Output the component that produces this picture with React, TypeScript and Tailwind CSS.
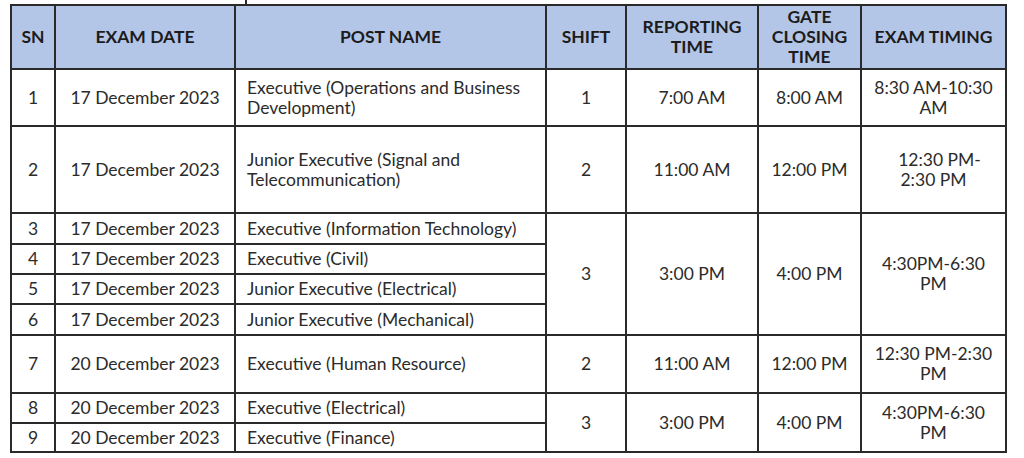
import React from 'react';

type Row = {
  sn: number;
  date: string;
  post: React.ReactNode;
  h: string;
  group?: { span: number; shift: string; report: string; gate: string; timing: React.ReactNode };
};

const rows: Row[] = [
  {
    sn: 1,
    date: '17 December 2023',
    post: (
      <>
        Executive (Operations and Business
        <br />
        Development)
      </>
    ),
    h: 'h-[57px]',
    group: { span: 1, shift: '1', report: '7:00 AM', gate: '8:00 AM', timing: <>8:30 AM-10:30<br />AM</> },
  },
  {
    sn: 2,
    date: '17 December 2023',
    post: (
      <>
        Junior Executive (Signal and
        <br />
        Telecommunication)
      </>
    ),
    h: 'h-[87px]',
    group: { span: 1, shift: '2', report: '11:00 AM', gate: '12:00 PM', timing: <span className="pl-3">12:30 PM-<br />2:30 PM</span> },
  },
  {
    sn: 3,
    date: '17 December 2023',
    post: 'Executive (Information Technology)',
    h: 'h-[31px]',
    group: { span: 4, shift: '3', report: '3:00 PM', gate: '4:00 PM', timing: <>4:30PM-6:30<br />PM</> },
  },
  { sn: 4, date: '17 December 2023', post: 'Executive (Civil)', h: 'h-[30px]' },
  { sn: 5, date: '17 December 2023', post: 'Junior Executive (Electrical)', h: 'h-[30px]' },
  { sn: 6, date: '17 December 2023', post: 'Junior Executive (Mechanical)', h: 'h-[31px]' },
  {
    sn: 7,
    date: '20 December 2023',
    post: 'Executive (Human Resource)',
    h: 'h-[58px]',
    group: { span: 1, shift: '2', report: '11:00 AM', gate: '12:00 PM', timing: <>12:30 PM-2:30<br />PM</> },
  },
  {
    sn: 8,
    date: '20 December 2023',
    post: 'Executive (Electrical)',
    h: 'h-[30px]',
    group: { span: 2, shift: '3', report: '3:00 PM', gate: '4:00 PM', timing: <>4:30PM-6:30<br />PM</> },
  },
  { sn: 9, date: '20 December 2023', post: 'Executive (Finance)', h: 'h-[29px]' },
];

const cell = 'border-2 border-[#2a2a2a] p-0 align-middle';

export default function App() {
  return (
    <div className="w-[1024px] h-[458px] bg-white overflow-hidden text-[#2b2b2b] font-['Lato','Noto_Sans',sans-serif]">
      {/* stub of the line from the content above */}
      <div className="h-[4px] ml-[245px] w-[2px] bg-[#2a2a2a]" />

      <table className="ml-[10px] w-[995px] border-collapse table-fixed text-[17.5px] leading-[20px]">
        <colgroup>
          <col className="w-[44px]" />
          <col className="w-[180px]" />
          <col className="w-[311px]" />
          <col className="w-[80px]" />
          <col className="w-[132px]" />
          <col className="w-[103px]" />
          <col className="w-[145px]" />
        </colgroup>
        <thead>
          <tr className="h-[64px] bg-[#b4c6e7] text-[#1c1c1c] font-bold text-center leading-[20px]">
            <th className={cell}>SN</th>
            <th className={cell}>EXAM DATE</th>
            <th className={cell}>POST NAME</th>
            <th className={cell}>SHIFT</th>
            <th className={cell}>
              REPORTING
              <br />
              TIME
            </th>
            <th className={cell}>
              GATE
              <br />
              CLOSING
              <br />
              TIME
            </th>
            <th className={cell}>EXAM TIMING</th>
          </tr>
        </thead>
        <tbody>
          {rows.map((r) => (
            <tr key={r.sn} className={r.h}>
              <td className={`${cell} text-center`}>{r.sn}</td>
              <td className={`${cell} text-center`}>{r.date}</td>
              <td className={`${cell} pl-[11px]`}>{r.post}</td>
              {r.group && (
                <>
                  <td rowSpan={r.group.span} className={`${cell} text-center`}>
                    {r.group.shift}
                  </td>
                  <td rowSpan={r.group.span} className={`${cell} text-center`}>
                    {r.group.report}
                  </td>
                  <td rowSpan={r.group.span} className={`${cell} text-center`}>
                    {r.group.gate}
                  </td>
                  <td rowSpan={r.group.span} className={`${cell} text-center`}>
                    {r.group.timing}
                  </td>
                </>
              )}
            </tr>
          ))}
        </tbody>
      </table>
    </div>
  );
}
